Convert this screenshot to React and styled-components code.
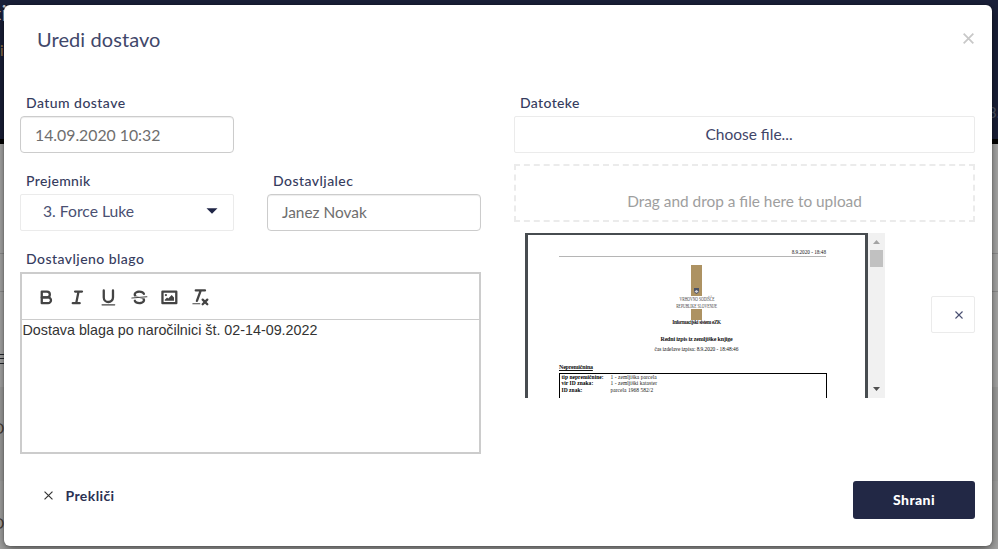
import React from 'react';
import styled, { createGlobalStyle } from 'styled-components';

const NAVY = '#2b3153';
const UI = '"Lato", "Open Sans", sans-serif';
const DOC = '"Liberation Serif", serif';

const GlobalStyle = createGlobalStyle`
  *, *::before, *::after { box-sizing: border-box; }
  body { margin: 0; font-family: ${UI}; color: ${NAVY}; overflow: hidden; }
`;

const Page = styled.div`
  position: relative;
  width: 998px;
  height: 549px;
  overflow: hidden;
  display: flex;
  flex-direction: column;
  background: #a8a8a7;
`;
const Band = styled.div`
  flex: none;
  height: ${p => p.$h}px;
  background: ${p => p.$bg};
  border-bottom: ${p => (p.$line ? '1px solid #929292' : '0')};
`;
const Peek = styled.span`
  position: absolute;
  left: ${p => p.$x}px;
  top: ${p => p.$y}px;
  font-size: ${p => p.$size || 15}px;
  line-height: 18px;
  color: ${p => p.$color};
`;
const MenuLines = styled.span`
  position: absolute;
  left: 0;
  top: 354px;
  width: 4px;
  height: 10px;
  border: solid #25282e;
  border-width: 1px 0;
  background: linear-gradient(#25282e, #25282e) 0 3px / 4px 1px no-repeat;
`;

const Modal = styled.form`
  position: absolute;
  top: 5px;
  left: 4px;
  width: 988px;
  height: 541px;
  padding: 0 17px 0 16px;
  background: #fff;
  border-radius: 6px;
  box-shadow: 0 4px 12px rgba(0, 0, 0, 0.5), 0 0 2px rgba(0, 0, 0, 0.35);
`;
const Header = styled.header`
  display: flex;
  justify-content: space-between;
  align-items: center;
  height: 88px;
  padding: 0 1px 21px 17px;
`;
const Title = styled.h1`
  margin: 0;
  font-size: 20px;
  font-weight: 400;
  line-height: 24px;
  letter-spacing: 0.08px;
  color: #41476a;
`;
const PlainButton = styled.button`
  display: flex;
  align-items: center;
  padding: 0;
  border: 0;
  background: none;
  font-family: inherit;
  color: ${NAVY};
`;
const Columns = styled.div`
  display: grid;
  grid-template-columns: 461px 461px;
  column-gap: 33px;
  height: 361px;
`;
const Column = styled.section`
  display: flex;
  flex-direction: column;
`;
const FieldRow = styled.div`
  display: grid;
  grid-template-columns: 214px 214px;
  column-gap: 33px;
  margin-bottom: 18px;
`;
const Field = styled.label`
  display: flex;
  flex-direction: column;
`;
const Label = styled.span`
  height: 20px;
  margin-bottom: 3px;
  padding-left: 6px;
  font-size: 14px;
  font-weight: 500;
  line-height: 20px;
  letter-spacing: ${p => p.$ls ?? 0.45}px;
  color: #363c5e;
  white-space: nowrap;
`;
const Input = styled.div`
  height: 37px;
  padding: 0 14px;
  border: 1px solid #ccc;
  border-radius: 4px;
  box-shadow: inset 0 1px 1px rgba(0, 0, 0, 0.075);
  font-size: ${p => p.$size || 15.8}px;
  line-height: 35px;
  color: #6e6e6e;
`;
const Select = styled.div`
  display: flex;
  justify-content: space-between;
  align-items: center;
  height: 37px;
  padding: 0 15px 3px 22px;
  border: 1px solid #ebebeb;
  border-radius: 2px;
  font-size: 15.7px;
  color: #4a5072;
`;
const Editor = styled.div`
  height: 182px;
  border: 2px solid #ccc;
`;
const Toolbar = styled.div`
  display: flex;
  align-items: center;
  height: 46px;
  padding: 1px 0 0 9.4px;
  border-bottom: 1px solid #ccc;
`;
const Tool = styled.span`
  display: flex;
  justify-content: center;
  width: 30.75px;
  svg {
    width: 20.75px;
    height: 20.75px;
    fill: none;
    stroke: #444;
    stroke-width: 2;
    stroke-linecap: round;
    stroke-linejoin: round;
  }
  .fill { fill: #444; stroke: none; }
  .thin { stroke-width: 1; }
`;
const EditorText = styled.p`
  margin: 0;
  padding-left: 0.5px;
  font: 14.3px/20px "Liberation Sans", Arial, sans-serif;
  color: #333;
`;

const FileButton = styled.div`
  height: 37px;
  padding-left: 9px;
  border: 1px solid #ebebeb;
  border-radius: 2px;
  font-size: 15.5px;
  line-height: 35px;
  text-align: center;
  color: #3f4568;
`;
const DropZone = styled.div`
  height: 58px;
  margin-top: 11px;
  padding-top: 25px;
  border: 2px dashed #ebebeb;
  font-size: 15.4px;
  line-height: 20px;
  text-align: center;
  color: #9e9e9e;
`;
const FileRow = styled.div`
  display: flex;
  justify-content: space-between;
  align-items: center;
  height: 165px;
  margin-top: 11px;
  padding-left: 11px;
`;
const RemoveButton = styled.div`
  display: flex;
  justify-content: flex-end;
  align-items: center;
  width: 44px;
  height: 37px;
  margin-bottom: 2px;
  padding-right: 11px;
  border: 1px solid #ebebeb;
  border-radius: 2px;
`;
const Preview = styled.div`
  display: flex;
  width: 360px;
  height: 165px;
  overflow: hidden;
  background: #474c50;
`;
const Sheet = styled.article`
  width: 337px;
  margin: 2px 3px 0;
  padding: 12px 39px 0 31px;
  background: #fff;
  font-family: ${DOC};
  color: #000;
`;
const SheetCenter = styled.div`
  padding-left: 8px;
`;
const DocLine = styled.div`
  display: flex;
  justify-content: ${p => p.$justify || 'center'};
  height: ${p => p.$h}px;
  margin-top: ${p => p.$mt || 0}px;
  font-size: ${p => p.$size}px;
  font-weight: ${p => (p.$bold ? 700 : 400)};
  line-height: ${p => p.$h}px;
  letter-spacing: ${p => p.$ls || 0}px;
  text-decoration: ${p => (p.$underline ? 'underline' : 'none')};
  color: ${p => p.$color || '#111'};
  white-space: nowrap;
`;
const DocDate = styled(DocLine)`
  padding-bottom: 1px;
  border-bottom: 1px solid #b5b5b5;
`;
const Condensed = styled.span`
  transform: scaleX(${p => p.$x});
`;
const Crest = styled.div`
  display: flex;
  justify-content: center;
  align-items: flex-end;
  width: 11px;
  height: ${p => p.$h}px;
  margin: ${p => p.$mt || 0}px auto 0;
  padding-bottom: 2px;
  background: #ad9262;
`;
const DocTable = styled.dl`
  display: grid;
  grid-template-columns: 49px 1fr;
  grid-template-rows: 6px 7px 7px;
  width: 268px;
  height: 40px;
  margin: 2px 0 0;
  padding: 0 0 0 1.5px;
  border: 1px solid #000;
  font-size: 5.5px;
  line-height: 6px;
  letter-spacing: 0.03px;
  white-space: nowrap;
`;
const Key = styled.dt`
  font-weight: 700;
`;
const Value = styled.dd`
  margin: 0;
  color: #222;
`;
const Scrollbar = styled.div`
  display: flex;
  flex-direction: column;
  justify-content: space-between;
  align-items: center;
  width: 17px;
  background: #f1f1f1;
  padding: 7px 0;
`;
const Thumb = styled.div`
  width: 13px;
  height: 17px;
  margin: 6px 0 auto;
  background: #c1c1c1;
`;

const Footer = styled.footer`
  display: flex;
  justify-content: space-between;
  padding: 27px 0 0 24px;
`;
const Cancel = styled(PlainButton)`
  height: 29px;
  gap: 12.5px;
  font-size: 14px;
  font-weight: 700;
  letter-spacing: 0.4px;
`;
const Save = styled.button`
  width: 122px;
  height: 38px;
  padding: 0 0 2px;
  border: 0;
  border-radius: 3px;
  background: #222845;
  font: 900 14px ${UI};
  letter-spacing: 0.4px;
  color: #fff;
`;

const Cross = ({ size, color, width }) => (
  <svg width={size} height={size} viewBox="0 0 10 10" fill="none" stroke={color} strokeWidth={width}>
    <path d="M.6.6l8.8 8.8M9.4.6L.6 9.4" />
  </svg>
);
const Arrow = ({ color, up }) => (
  <svg width="7" height="4" viewBox="0 0 7 4" fill={color}>
    <path d={up ? 'M0 4L3.5 0L7 4z' : 'M0 0H7L3.5 4z'} />
  </svg>
);

const TOOLS = [
  <svg viewBox="0 0 18 18">
    <path d="M5,4H9.5A2.5,2.5,0,0,1,12,6.5v0A2.5,2.5,0,0,1,9.5,9H5A0,0,0,0,1,5,9V4A0,0,0,0,1,5,4Z" />
    <path d="M5,9h5.5A2.5,2.5,0,0,1,13,11.5v0A2.5,2.5,0,0,1,10.5,14H5a0,0,0,0,1,0,0V9A0,0,0,0,1,5,9Z" />
  </svg>,
  <svg viewBox="0 0 18 18">
    <path d="M7 4H13M5 14H11M8 14L10 4" />
  </svg>,
  <svg viewBox="0 0 18 18">
    <path d="M5,3V9a4.012,4.012,0,0,0,4,4H9a4.012,4.012,0,0,0,4-4V3" />
    <rect className="fill" x="3" y="15" width="12" height="1" rx=".5" />
  </svg>,
  <svg viewBox="0 0 18 18">
    <path className="thin" d="M15.5 8.5L2.5 9.5" />
    <path className="fill" d="M9.007,8C6.542,7.791,6,7.519,6,6.5,6,5.792,7.283,5,9,5c1.571,0,2.765.679,2.969,1.309a1,1,0,0,0,1.9-.617C13.356,4.106,11.354,3,9,3,6.2,3,4,4.538,4,6.5a3.2,3.2,0,0,0,.5,1.843Z" />
    <path className="fill" d="M8.984,10C11.457,10.208,12,10.479,12,11.5c0,0.708-1.283,1.5-3,1.5-1.571,0-2.765-.679-2.969-1.309a1,1,0,1,0-1.9.617C4.644,13.894,6.646,15,9,15c2.8,0,5-1.538,5-3.5a3.2,3.2,0,0,0-.5-1.843Z" />
  </svg>,
  <svg viewBox="0 0 18 18">
    <rect x="3" y="4" width="12" height="10" />
    <circle className="fill" cx="6" cy="7" r="1" />
    <path className="fill" d="M5 12V11L7 9L8 10L11 7L13 9V12z" />
  </svg>,
  <svg viewBox="0 0 18 18">
    <path d="M5 3H13M6 12L9.35 3M11 11L15 15M15 11L11 15" />
    <rect className="fill" x="2" y="14" width="7" height="1" rx=".5" />
  </svg>,
];

const PARCEL = [
  ['tip nepremičnine:', '1 - zemljiška parcela'],
  ['vir ID znaka:', '1 - zemljiški kataster'],
  ['ID znak:', 'parcela 1968 582/2'],
];

export default function App() {
  return (
    <>
      <GlobalStyle />
      <Page>
        <Band $h={139} $bg="#1a2039" />
        <Band $h={5} $bg="#000" />
        <Band $h={110} $bg="#adadac" $line />
        <Band $h={38} $bg="#adadac" $line />
        <Band $h={95} $bg="#adadac" />
        <Band $h={94} $bg="#a3a3a2" />
        <Peek $x={-9} $y={4} $size={22} $color="#c9cbd2">ci</Peek>
        <Peek $x={0} $y={41} $color="#9c7a4c">i</Peek>
        <Peek $x={988} $y={103} $color="#4f5566">3.</Peek>
        <MenuLines />
        <Peek $x={-7} $y={419} $color="#4a4038">D</Peek>
        <Peek $x={-7} $y={514} $color="#4a4038">D</Peek>

        <Modal onSubmit={e => e.preventDefault()}>
          <Header>
            <Title>Uredi dostavo</Title>
            <PlainButton type="button" aria-label="Zapri">
              <Cross size={11} color="#c8c8c8" width={1.6} />
            </PlainButton>
          </Header>

          <Columns>
            <Column>
              <FieldRow>
                <Field>
                  <Label>Datum dostave</Label>
                  <Input>14.09.2020 10:32</Input>
                </Field>
              </FieldRow>
              <FieldRow>
                <Field>
                  <Label $ls={0.35}>Prejemnik</Label>
                  <Select>
                    3. Force Luke
                    <svg width="12" height="6" viewBox="0 0 12 6" fill="#1f2546">
                      <path d="M.5.3h11L6 5.8z" />
                    </svg>
                  </Select>
                </Field>
                <Field>
                  <Label>Dostavljalec</Label>
                  <Input $size={15.4}>Janez Novak</Input>
                </Field>
              </FieldRow>
              <Label>Dostavljeno blago</Label>
              <Editor>
                <Toolbar>
                  {TOOLS.map((icon, i) => <Tool key={i}>{icon}</Tool>)}
                </Toolbar>
                <EditorText>Dostava blaga po naročilnici št. 02-14-09.2022</EditorText>
              </Editor>
            </Column>

            <Column>
              <Label $ls={0.35}>Datoteke</Label>
              <FileButton>Choose file...</FileButton>
              <DropZone>Drag and drop a file here to upload</DropZone>
              <FileRow>
                <Preview>
                  <Sheet>
                    <DocDate $h={10} $size={5.2} $justify="flex-end">8.9.2020 - 18:48</DocDate>
                    <SheetCenter>
                      <Crest $h={31} $mt={8}>
                        <svg width="5" height="6" viewBox="0 0 5 6">
                          <path d="M0 0H5V3Q5 5 2.5 6Q0 5 0 3z" fill="#4d5366" />
                          <path d="M.5 3.5L2.5 2L4.5 3.5L2.5 5z" fill="#d8d8dc" />
                        </svg>
                      </Crest>
                      <DocLine $h={7} $size={7} $color="#444"><Condensed $x={0.53}>VRHOVNO SODIŠČE</Condensed></DocLine>
                      <DocLine $h={6} $size={7} $color="#444"><Condensed $x={0.53}>REPUBLIKE SLOVENIJE</Condensed></DocLine>
                      <Crest $h={11} />
                      <DocLine $h={5} $size={5.2} $bold $ls={-0.33}>Informacijski sistem eZK</DocLine>
                      <DocLine $h={8} $mt={10} $size={6} $bold $ls={-0.17}>Redni izpis iz zemljiške knjige</DocLine>
                      <DocLine $h={8} $mt={2} $size={5.4} $ls={-0.04}>čas izdelave izpisa: 8.9.2020 - 18:48:46</DocLine>
                    </SheetCenter>
                    <DocLine $h={8} $mt={10} $size={6} $bold $underline $ls={-0.2} $justify="flex-start">Nepremičnina</DocLine>
                    <DocTable>
                      {PARCEL.map(([k, v]) => (
                        <React.Fragment key={k}>
                          <Key>{k}</Key>
                          <Value>{v}</Value>
                        </React.Fragment>
                      ))}
                    </DocTable>
                  </Sheet>
                  <Scrollbar>
                    <Arrow up color="#a3a3a3" />
                    <Thumb />
                    <Arrow color="#505050" />
                  </Scrollbar>
                </Preview>
                <RemoveButton role="button" aria-label="Odstrani">
                  <Cross size={8} color="#4a5072" width={1.4} />
                </RemoveButton>
              </FileRow>
            </Column>
          </Columns>

          <Footer>
            <Cancel type="button">
              <Cross size={9} color="#333" width={1.3} />
              Prekliči
            </Cancel>
            <Save type="submit">Shrani</Save>
          </Footer>
        </Modal>
      </Page>
    </>
  );
}
